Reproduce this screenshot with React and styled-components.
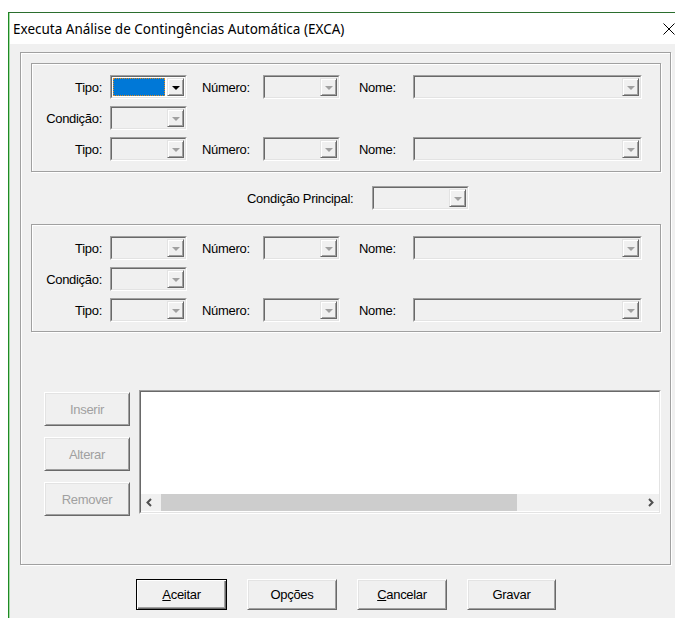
import React from 'react';
import styled, { createGlobalStyle } from 'styled-components';

const GlobalStyle = createGlobalStyle`
  html, body {
    margin: 0;
    padding: 0;
    background: #ffffff;
    overflow: hidden;
  }
  * {
    box-sizing: border-box;
  }
`;

const Window = styled.div`
  margin: 12px 0 0 8px;
  height: 606px;
  border-top: 1px solid #2b6e2e;
  border-left: 1px solid #1f8a24;
  display: flex;
  flex-direction: column;
`;

const TitleBar = styled.div`
  height: 31px;
  flex: none;
  background: #ffffff;
  border-left: 1px solid #a8dca8;
  display: flex;
  align-items: center;
  justify-content: space-between;
  padding: 0 0 0 3px;
  font-family: "Noto Sans", "DejaVu Sans", sans-serif;
  font-size: 13.5px;
  color: #000;
`;

const CloseGlyph = styled.svg`
  width: 12px;
  height: 12px;
  margin-top: 1px;
`;

const Client = styled.div`
  flex: 1;
  background: #f0f0f0;
  border-left: 1px solid #a8dca8;
  padding: 8px 0 0 10px;
  font-family: "Liberation Sans", Arial, sans-serif;
  font-size: 13px;
  letter-spacing: -0.3px;
  color: #000;
`;

const Frame = styled.div`
  width: 651px;
  height: 513px;
  border: 1px solid #a0a0a0;
  box-shadow: inset 1px 1px 0 #ffffff, 1px 1px 0 #ffffff;
  padding: 10px 0 0 10px;
  display: flex;
  flex-direction: column;
`;

const Group = styled.div`
  width: 630px;
  border: 1px solid #a0a0a0;
  box-shadow: inset 1px 1px 0 #ffffff, 1px 1px 0 #ffffff;
  padding: ${p => p.$pad};
  display: grid;
  grid-template-columns: 78px 77px 76px 77px 73px 229px;
  grid-auto-rows: 24px;
  row-gap: 7px;
  align-items: center;
`;

const Label = styled.span`
  white-space: nowrap;
  text-align: ${p => (p.$right ? 'right' : 'left')};
  padding-right: ${p => (p.$right ? '8px' : '0')};
  padding-left: ${p => p.$indent || 0}px;
`;

const ComboOuter = styled.div`
  width: ${p => p.$w}px;
  height: 24px;
  border: 1px solid;
  border-color: #a0a0a0 #ffffff #ffffff #a0a0a0;
`;

const ComboInner = styled.div`
  height: 100%;
  border: 1px solid;
  border-color: #696969 #e3e3e3 #e3e3e3 #696969;
  background: ${p => (p.$active ? '#ffffff' : '#f0f0f0')};
  display: flex;
  padding: 1px;
`;

const ComboField = styled.div`
  flex: 1;
  margin-right: 2px;
  ${p =>
    p.$active &&
    `
    background: #0078d7;
    outline: 1px dotted #e08a1e;
    outline-offset: -1px;
  `}
`;

const DropButton = styled.div`
  width: 17px;
  flex: none;
  background: #f0f0f0;
  border: 1px solid;
  border-color: #e3e3e3 #696969 #696969 #e3e3e3;
  box-shadow: inset 1px 1px 0 #ffffff, inset -1px -1px 0 #a0a0a0;
  display: flex;
  align-items: center;
  justify-content: center;
`;

const Arrow = styled.span`
  width: 0;
  height: 0;
  border-left: 4px solid transparent;
  border-right: 4px solid transparent;
  border-top: 4px solid ${p => (p.$active ? '#000000' : '#a0a0a0')};
  margin-top: 1px;
`;

const Combo = ({ w, active }) => (
  <ComboOuter $w={w}>
    <ComboInner $active={active}>
      <ComboField $active={active} />
      <DropButton>
        <Arrow $active={active} />
      </DropButton>
    </ComboInner>
  </ComboOuter>
);

const Empty = styled.span``;

const PrincipalRow = styled.div`
  display: flex;
  align-items: center;
  gap: 19px;
  margin: 14px 0 14px 216px;
`;

const BottomArea = styled.div`
  display: flex;
  margin: 58px 0 0 13px;
  gap: 9px;
`;

const SideButtons = styled.div`
  display: flex;
  flex-direction: column;
  gap: 11px;
  margin-top: 2px;
`;

const PushButton = styled.button`
  width: ${p => p.$w}px;
  height: ${p => p.$h}px;
  padding: 0;
  background: #f0f0f0;
  font-family: "Liberation Sans", Arial, sans-serif;
  font-size: 13px;
  letter-spacing: -0.3px;
  color: ${p => (p.disabled ? '#a0a0a0' : '#000000')};
  border: 1px solid;
  border-color: ${p => (p.$default ? '#000000' : '#ffffff #696969 #696969 #ffffff')};
  box-shadow: ${p =>
    p.$default
      ? 'inset 1px 1px 0 #ffffff, inset -1px -1px 0 #696969, inset -2px -2px 0 #a0a0a0'
      : 'inset 1px 1px 0 #e3e3e3, inset -1px -1px 0 #a0a0a0'};
  u {
    text-decoration: underline;
  }
`;

const ListBox = styled.div`
  width: 522px;
  height: 124px;
  border: 1px solid;
  border-color: #a0a0a0 #ffffff #ffffff #a0a0a0;
  display: flex;
  flex-direction: column;
`;

const ListInner = styled.div`
  flex: 1;
  border: 1px solid;
  border-color: #696969 #e3e3e3 #e3e3e3 #696969;
  background: #ffffff;
  display: flex;
  flex-direction: column;
`;

const ListBody = styled.div`
  flex: 1;
`;

const HScroll = styled.div`
  height: 17px;
  margin-bottom: 1px;
  display: flex;
  background: #f0f0f0;
`;

const ScrollArrow = styled.div`
  width: 17px;
  display: flex;
  align-items: center;
  justify-content: center;
`;

const Track = styled.div`
  flex: 1;
  display: flex;
`;

const Thumb = styled.div`
  width: 356px;
  margin-left: 3px;
  background: #cdcdcd;
`;

const ButtonBar = styled.div`
  display: flex;
  gap: 20px;
  margin: 14px 0 0 116px;
`;

const Chevron = ({ dir }) => (
  <svg width="9" height="9" viewBox="0 0 9 9">
    <path
      d={dir === 'left' ? 'M6 1 L2.5 4.5 L6 8' : 'M3 1 L6.5 4.5 L3 8'}
      fill="none"
      stroke="#505050"
      strokeWidth="2"
    />
  </svg>
);

const ContingencyGroup = ({ pad, focused }) => (
  <Group $pad={pad}>
    <Label $right>Tipo:</Label>
    <Combo w={77} active={focused} />
    <Label $indent={15}>Número:</Label>
    <Combo w={77} />
    <Label $indent={19}>Nome:</Label>
    <Combo w={229} />

    <Label $right>Condição:</Label>
    <Combo w={77} />
    <Empty />
    <Empty />
    <Empty />
    <Empty />

    <Label $right>Tipo:</Label>
    <Combo w={77} />
    <Label $indent={15}>Número:</Label>
    <Combo w={77} />
    <Label $indent={19}>Nome:</Label>
    <Combo w={229} />
  </Group>
);

export default function App() {
  return (
    <>
      <GlobalStyle />
      <Window>
        <TitleBar>
          <span>Executa Análise de Contingências Automática (EXCA)</span>
          <CloseGlyph viewBox="0 0 12 12">
            <path d="M0.5 0.5 L11.5 11.5 M11.5 0.5 L0.5 11.5" stroke="#000" strokeWidth="1" />
          </CloseGlyph>
        </TitleBar>
        <Client>
          <Frame>
            <ContingencyGroup pad="11px 0 10px 0" focused />
            <PrincipalRow>
              <Label>Condição Principal:</Label>
              <Combo w={97} />
            </PrincipalRow>
            <ContingencyGroup pad="11px 0 9px 0" />
            <BottomArea>
              <SideButtons>
                <PushButton $w={86} $h={34} disabled>Inserir</PushButton>
                <PushButton $w={86} $h={34} disabled>Alterar</PushButton>
                <PushButton $w={86} $h={34} disabled>Remover</PushButton>
              </SideButtons>
              <ListBox>
                <ListInner>
                  <ListBody />
                  <HScroll>
                    <ScrollArrow>
                      <Chevron dir="left" />
                    </ScrollArrow>
                    <Track>
                      <Thumb />
                    </Track>
                    <ScrollArrow>
                      <Chevron dir="right" />
                    </ScrollArrow>
                  </HScroll>
                </ListInner>
              </ListBox>
            </BottomArea>
          </Frame>
          <ButtonBar>
            <PushButton $w={91} $h={31} $default>
              <u>A</u>ceitar
            </PushButton>
            <PushButton $w={90} $h={31}>Opções</PushButton>
            <PushButton $w={90} $h={31}>
              <u>C</u>ancelar
            </PushButton>
            <PushButton $w={89} $h={31}>Gravar</PushButton>
          </ButtonBar>
        </Client>
      </Window>
    </>
  );
}
